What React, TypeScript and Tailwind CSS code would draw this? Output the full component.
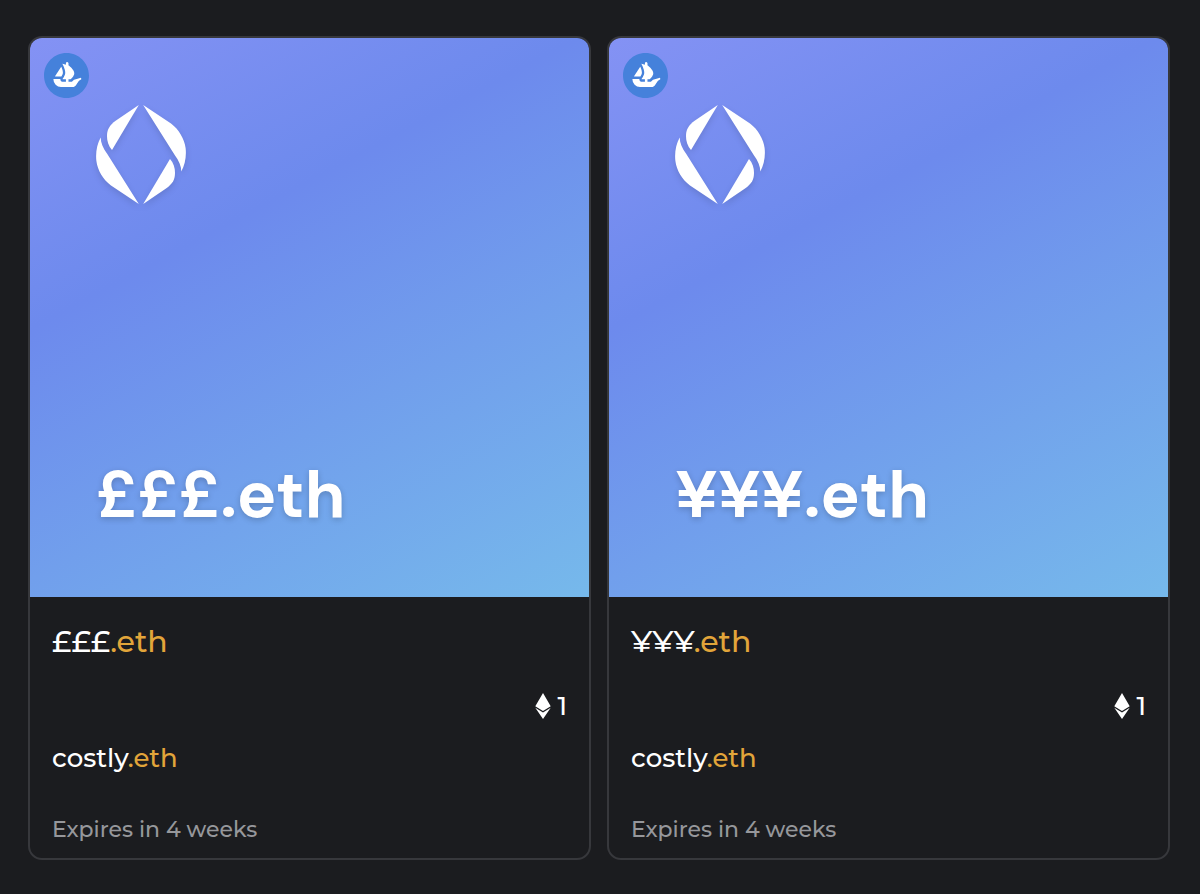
import React from 'react';
import { FaEthereum } from 'react-icons/fa';
import { SiOpensea } from 'react-icons/si';

interface Domain {
  label: string;
  owner: string;
  price: number;
  expires: string;
}

const domains: Domain[] = [
  { label: '£££', owner: 'costly', price: 1, expires: 'Expires in 4 weeks' },
  { label: '¥¥¥', owner: 'costly', price: 1, expires: 'Expires in 4 weeks' },
];

// The right half of the mark is the left half turned by 180 degrees
function EnsLogo() {
  const leaves = (
    <>
      <path d="M42.8 0 L16 45 C12.5 41 11 36.5 11 31 C11 25 13 20.5 20 15.5 Z" />
      <path d="M4.7 32.5 C4.7 38 7 43 11.3 49 L42.8 99 L15 80.5 C7 74.5 1.5 65 0.4 56 C-0.6 48 1 39 4.7 32.5 Z" />
    </>
  );

  return (
    <svg viewBox="0 0 90 99" className="h-[99px] w-[90px] overflow-visible drop-shadow-md" fill="#fff" aria-hidden="true">
      {leaves}
      <g transform="rotate(180 45 49.5)">{leaves}</g>
    </svg>
  );
}

function DomainCard({ label, owner, price, expires }: Domain) {
  return (
    <article className="min-w-0 flex-1 overflow-hidden rounded-[14px] border-2 border-[#37383c]">
      <div className="relative flex aspect-square flex-col justify-between bg-[linear-gradient(152deg,#8492f4_0%,#6d8aed_34%,#76b9eb_100%)] px-[66px] pt-[67px] pb-[62px]">
        <a href="#opensea" aria-label="View on OpenSea" className="absolute top-[15px] left-3.5 rounded-full bg-[radial-gradient(circle,#fff_55%,transparent_56%)]">
          <SiOpensea size={45} color="#4581db" />
        </a>
        <EnsLogo />
        <p className="font-['DM_Sans','Inter',sans-serif] text-[66px] leading-[80px] font-bold whitespace-nowrap text-white [text-shadow:0_2px_6px_rgb(0_0_0/0.2)]">
          {label}.eth
        </p>
      </div>
      <div className="px-[22px] pt-[25px] pb-2">
        <h2 className="text-[30px] leading-10 font-medium text-white">
          {label}<span className="text-[#e2a53a]">.eth</span>
        </h2>
        <div className="mt-6 flex items-center justify-end gap-1 text-[26px] leading-10 font-medium text-white">
          <FaEthereum size={26} className="w-5" />
          <span>{price}</span>
        </div>
        <a href="#owner" className="mt-3 block text-[26px] leading-10 font-medium text-white">
          {owner}<span className="text-[#e2a53a]">.eth</span>
        </a>
        <p className="mt-8 text-[22px] leading-10 font-medium text-[#96979b]">{expires}</p>
      </div>
    </article>
  );
}

export default function App() {
  return (
    <main className="flex min-h-screen items-start gap-4 bg-[#1b1c1f] py-9 pr-[30px] pl-7 font-['Montserrat','Inter',sans-serif]">
      {domains.map((domain) => (
        <DomainCard key={domain.label} {...domain} />
      ))}
    </main>
  );
}
